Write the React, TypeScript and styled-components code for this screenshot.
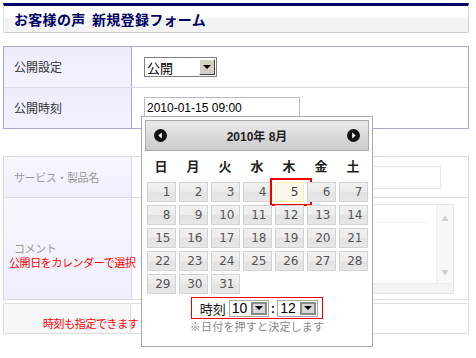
import React from 'react';
import styled, { createGlobalStyle } from 'styled-components';

const GlobalStyle = createGlobalStyle`
  html, body {
    margin: 0;
    padding: 0;
    background: #ffffff;
  }
  body {
    font-family: "Noto Sans CJK JP", sans-serif;
    font-size: 12px;
    color: #222;
  }
`;

const JP = '"Noto Sans CJK JP", sans-serif';
const LATIN = '"Liberation Sans", "Noto Sans CJK JP", sans-serif';

const Page = styled.div`
  position: relative;
  width: 466px;
  height: 352px;
  padding: 3px;
`;

const TitleBar = styled.div`
  box-sizing: border-box;
  height: 30px;
  border-top: 3px solid #000066;
  border-left: 1px solid #e2e2e2;
  border-right: 1px solid #d6d6d6;
  border-bottom: 1px solid #cccccc;
  background: linear-gradient(#ffffff 0, #ffffff 48%, #f3f3f3 48%, #f3f3f3 100%);
  display: flex;
  align-items: center;
  padding-left: 10px;
  font-family: ${JP};
  font-size: 14px;
  font-weight: bold;
  color: #000066;
  letter-spacing: 0.3px;
  word-spacing: 3px;
`;

const FormTable = styled.div<{ $faded?: boolean; $top: number }>`
  margin-top: ${p => p.$top}px;
  border: 1px solid ${p => (p.$faded ? '#d8d8e6' : '#aaaacc')};
`;

const Row = styled.div<{ $h: number; $faded?: boolean }>`
  display: grid;
  grid-template-columns: 128px 1fr;
  height: ${p => p.$h}px;
  & + & {
    border-top: 1px solid ${p => (p.$faded ? '#d8d8e6' : '#aaaacc')};
  }
`;

const LabelCell = styled.div<{ $faded?: boolean; $lift?: number }>`
  display: flex;
  align-items: center;
  padding-left: 10px;
  padding-bottom: ${p => p.$lift ?? 0}px;
  border-right: 1px solid ${p => (p.$faded ? '#d8d8e6' : '#aaaacc')};
  background: ${p =>
    p.$faded
      ? 'linear-gradient(#f7f7ff, #efeffc)'
      : 'linear-gradient(#ececfb, #f3f3ff)'};
  font-family: ${JP};
  font-size: ${p => (p.$faded ? 11 : 12)}px;
  line-height: 12px;
  color: ${p => (p.$faded ? '#999999' : '#333333')};
  letter-spacing: ${p => (p.$faded ? '-0.4px' : '0')};
`;

const FieldCell = styled.div`
  display: flex;
  align-items: center;
  padding-left: 12px;
`;

const SelectBox = styled.span<{ $w: number; $h: number; $dark?: boolean }>`
  display: inline-flex;
  box-sizing: border-box;
  width: ${p => p.$w}px;
  height: ${p => p.$h}px;
  border: 1px solid ${p => (p.$dark ? '#a5a5a5' : '#7f7f7f')};
  background: #ffffff;
`;

const SelectValue = styled.span<{ $size: number; $font: string }>`
  flex: 1;
  display: flex;
  align-items: center;
  padding-left: 2px;
  font-family: ${p => p.$font};
  font-size: ${p => p.$size}px;
  color: #000;
`;

const SelectButton = styled.span<{ $dark?: boolean }>`
  box-sizing: border-box;
  width: 16px;
  margin: 1px;
  display: flex;
  align-items: center;
  justify-content: center;
  background: ${p => (p.$dark ? '#d6d6d6' : '#d4d0c8')};
  border: ${p => (p.$dark ? '2px' : '1px')} solid;
  border-color: ${p => (p.$dark ? '#8a8a8a' : '#ffffff #404040 #404040 #ffffff')};
  &::after {
    content: "";
    border-left: 4px solid transparent;
    border-right: 4px solid transparent;
    border-top: 4px solid #000;
  }
`;

const TextInput = styled.div<{ $w: number; $h: number; $faded?: boolean }>`
  box-sizing: border-box;
  width: ${p => p.$w}px;
  height: ${p => p.$h}px;
  border: 1px solid ${p => (p.$faded ? '#e6e6e6' : '#b9bcc4')};
  background: #fff;
  padding-left: 2px;
  display: flex;
  align-items: center;
  font-family: ${LATIN};
  font-size: 12px;
  color: #000;
`;

const TextArea = styled.div`
  box-sizing: border-box;
  width: 310px;
  height: 90px;
  border: 1px solid #e6e6e6;
  display: grid;
  grid-template-columns: 1fr 17px;
  grid-template-rows: 1fr 10px;
`;

const TextAreaBody = styled.div`
  border-bottom: 1px solid #f0f0f0;
  margin: 0 6px 60px 0;
`;

const ScrollBar = styled.div`
  background: #f8f8f8;
  border-left: 1px solid #f0f0f0;
  display: flex;
  flex-direction: column;
  justify-content: space-between;
  align-items: center;
  padding: 8px 0 6px;
  font-size: 7px;
  color: #cfcfcf;
`;

const HScroll = styled.div`
  grid-column: 1 / span 2;
  background: #f4f4f4;
  border-top: 1px solid #ececec;
`;

const BottomBox = styled.div`
  margin-top: 3px;
  height: 29px;
  border: 1px solid #dddddd;
  display: grid;
  grid-template-columns: 127px 1fr;
`;

const BottomLabel = styled.div`
  background: #f7f7f7;
  border-right: 1px solid #dddddd;
`;

const Note = styled.div<{ $x: number; $y: number }>`
  position: absolute;
  left: ${p => p.$x}px;
  top: ${p => p.$y}px;
  font-family: ${JP};
  font-size: 11px;
  line-height: 11px;
  color: #ff0000;
  letter-spacing: -0.4px;
  white-space: nowrap;
`;

/* calendar popup */

const Popup = styled.div`
  position: absolute;
  left: 141px;
  top: 116px;
  box-sizing: border-box;
  width: 232px;
  height: 231px;
  padding: 3px;
  border: 1px solid #aaaaaa;
  background: #ffffff;
  display: flex;
  flex-direction: column;
  align-items: center;
`;

const CalHeader = styled.div`
  box-sizing: border-box;
  align-self: stretch;
  height: 31px;
  border: 1px solid #aaaaaa;
  background: linear-gradient(#ebebeb, #d9d9d9 55%, #cbcbcb);
  display: flex;
  align-items: center;
  justify-content: space-between;
  padding: 0 8px;
`;

const MonthTitle = styled.span`
  font-family: ${LATIN};
  font-size: 12px;
  font-weight: bold;
  color: #222;
`;

const NavIcon = ({ dir }: { dir: 'prev' | 'next' }) => (
  <svg width="13" height="13" viewBox="0 0 13 13">
    <circle cx="6.5" cy="6.5" r="6.5" fill="#111" />
    {dir === 'prev' ? (
      <polygon points="7.8,3.5 4.3,6.5 7.8,9.5" fill="#fff" />
    ) : (
      <polygon points="5.2,3.5 8.7,6.5 5.2,9.5" fill="#fff" />
    )}
  </svg>
);

const WeekRow = styled.div`
  display: grid;
  grid-template-columns: repeat(7, 29px);
  column-gap: 3px;
  height: 31px;
  align-items: center;
  padding-bottom: 2px;
  box-sizing: border-box;
`;

const WeekDay = styled.span`
  text-align: center;
  font-family: ${JP};
  font-size: 13px;
  font-weight: bold;
  color: #222;
`;

const DayGrid = styled.div`
  display: grid;
  grid-template-columns: repeat(7, 29px);
  grid-auto-rows: 20px;
  gap: 3px;
`;

const DayCell = styled.div<{ $hl?: boolean }>`
  position: relative;
  box-sizing: border-box;
  border: 1px solid ${p => (p.$hl ? '#fcefa1' : '#d3d3d3')};
  background: ${p =>
    p.$hl
      ? '#fbf9ee'
      : 'linear-gradient(#f0f0f0 0, #ececec 50%, #e2e2e2 51%, #e6e6e6 100%)'};
  text-align: right;
  padding-right: 4px;
  font-family: "DejaVu Sans", sans-serif;
  font-size: 12px;
  line-height: 18px;
  color: ${p => (p.$hl ? '#363636' : '#555555')};
`;

const Marker = styled.span`
  position: absolute;
  left: -6px;
  right: -9px;
  top: -5px;
  bottom: -5px;
  border: 2px solid #ee0000;
`;

const TimeRow = styled.div`
  margin-top: 3px;
  box-sizing: border-box;
  height: 22px;
  display: flex;
  align-items: center;
  gap: 3px;
  padding: 0 4px 0 8px;
  border: 1px solid #ee0000;
  font-family: ${JP};
  font-size: 13px;
  color: #111;
`;

const Colon = styled.span`
  font-family: ${LATIN};
  font-size: 13px;
  font-weight: bold;
  margin: 0 -1px;
`;

const Hint = styled.div`
  font-family: ${JP};
  font-size: 11px;
  line-height: 14px;
  color: #888888;
  letter-spacing: 0.2px;
`;

const weekDays = ['日', '月', '火', '水', '木', '金', '土'];
const days = Array.from({ length: 31 }, (_, i) => i + 1);

function Select({ value, w, h, size, font, dark }: { value: string; w: number; h: number; size: number; font: string; dark?: boolean }) {
  return (
    <SelectBox $w={w} $h={h} $dark={dark}>
      <SelectValue $size={size} $font={font}>{value}</SelectValue>
      <SelectButton $dark={dark} />
    </SelectBox>
  );
}

function Calendar() {
  return (
    <Popup>
      <CalHeader>
        <NavIcon dir="prev" />
        <MonthTitle>2010年 8月</MonthTitle>
        <NavIcon dir="next" />
      </CalHeader>
      <WeekRow>
        {weekDays.map(d => (
          <WeekDay key={d}>{d}</WeekDay>
        ))}
      </WeekRow>
      <DayGrid>
        {days.map(d => (
          <DayCell key={d} $hl={d === 5}>
            {d}
            {d === 5 && <Marker />}
          </DayCell>
        ))}
      </DayGrid>
      <TimeRow>
        <span>時刻</span>
        <Select value="10" w={40} h={17} size={14} font={LATIN} dark />
        <Colon>:</Colon>
        <Select value="12" w={41} h={17} size={14} font={LATIN} dark />
      </TimeRow>
      <Hint>※日付を押すと決定します</Hint>
    </Popup>
  );
}

export default function App() {
  return (
    <>
      <GlobalStyle />
      <Page>
        <TitleBar>お客様の声 新規登録フォーム</TitleBar>

        <FormTable $top={13}>
          <Row $h={40}>
            <LabelCell>公開設定</LabelCell>
            <FieldCell>
              <Select value="公開" w={73} h={20} size={13} font={JP} />
            </FieldCell>
          </Row>
          <Row $h={40}>
            <LabelCell>公開時刻</LabelCell>
            <FieldCell>
              <TextInput $w={156} $h={22}>2010-01-15 09:00</TextInput>
            </FieldCell>
          </Row>
        </FormTable>

        <FormTable $top={27} $faded>
          <Row $h={40} $faded>
            <LabelCell $faded>サービス・製品名</LabelCell>
            <FieldCell>
              <TextInput $w={297} $h={23} $faded />
            </FieldCell>
          </Row>
          <Row $h={101} $faded>
            <LabelCell $faded $lift={2}>コメント</LabelCell>
            <FieldCell>
              <TextArea>
                <TextAreaBody />
                <ScrollBar>
                  <span>▲</span>
                  <span>▼</span>
                </ScrollBar>
                <HScroll />
              </TextArea>
            </FieldCell>
          </Row>
        </FormTable>

        <BottomBox>
          <BottomLabel />
          <div />
        </BottomBox>

        <Note $x={9} $y={257}>公開日をカレンダーで選択</Note>
        <Note $x={43} $y={318}>時刻も指定できます</Note>

        <Calendar />
      </Page>
    </>
  );
}
